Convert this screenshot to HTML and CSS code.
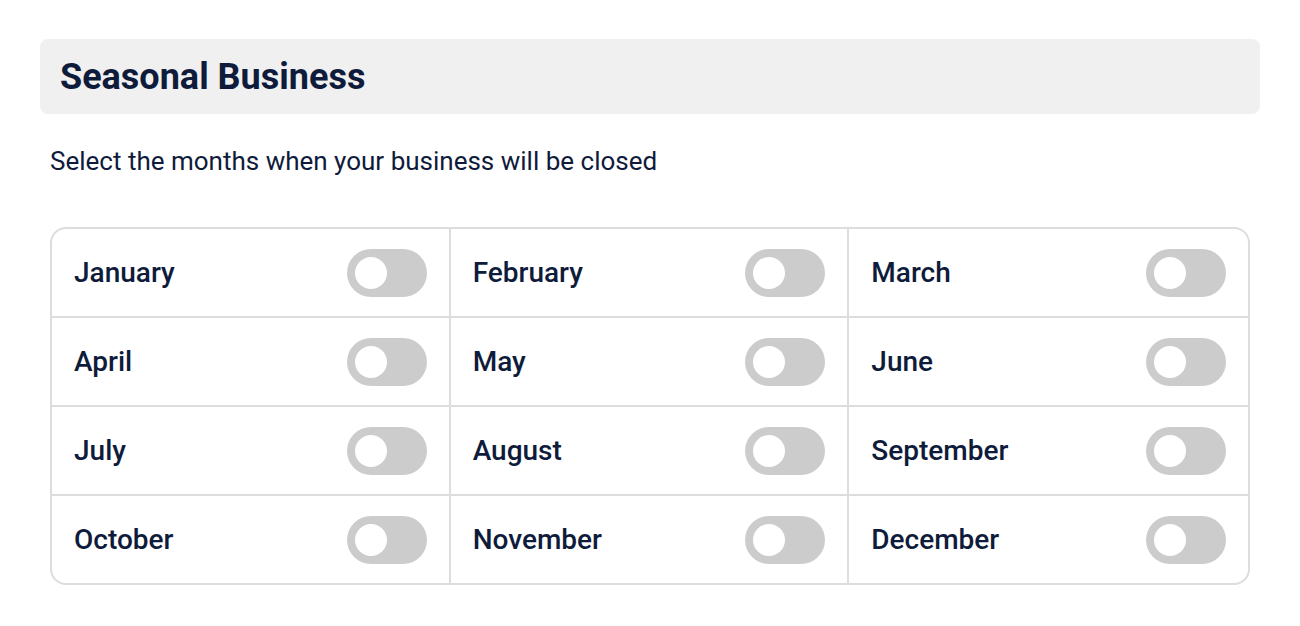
FILE: index.html
```html
<!DOCTYPE html>
<html lang="en">
<head>
    <meta charset="UTF-8">
    <meta name="viewport" content="width=device-width, initial-scale=1.0">
    <title>Seasonal Business</title>
    <link rel="stylesheet" href="styles.css">
</head>
<body>
    <div class="page">
        <header class="section-header">Seasonal Business</header>
        <p class="hint">Select the months when your business will be closed</p>
        <div class="months">
            <label class="month">January <span class="toggle"><span class="knob"></span></span></label>
            <label class="month">February <span class="toggle"><span class="knob"></span></span></label>
            <label class="month">March <span class="toggle"><span class="knob"></span></span></label>
            <label class="month">April <span class="toggle"><span class="knob"></span></span></label>
            <label class="month">May <span class="toggle"><span class="knob"></span></span></label>
            <label class="month">June <span class="toggle"><span class="knob"></span></span></label>
            <label class="month">July <span class="toggle"><span class="knob"></span></span></label>
            <label class="month">August <span class="toggle"><span class="knob"></span></span></label>
            <label class="month">September <span class="toggle"><span class="knob"></span></span></label>
            <label class="month">October <span class="toggle"><span class="knob"></span></span></label>
            <label class="month">November <span class="toggle"><span class="knob"></span></span></label>
            <label class="month">December <span class="toggle"><span class="knob"></span></span></label>
        </div>
    </div>
</body>
</html>
```

FILE: styles.css
```css
body {
    margin: 0;
    padding: 0;
    background: #fff;
    font-family: Roboto, Arial, sans-serif;
    color: #0f1b3b;
}
.page {
    padding: 39px 40px;
}
.section-header {
    display: flex;
    align-items: center;
    height: 75px;
    padding: 0 20px;
    background-color: #f0f0f0;
    border-radius: 8px;
    font-size: 36px;
    font-weight: 700;
}
.hint {
    margin: 32px 10px 0;
    font-size: 26px;
    line-height: 30px;
}
.months {
    display: grid;
    grid-template-columns: repeat(3, 1fr);
    margin: 51px 10px 0;
    border: 2px solid #dddddd;
    border-radius: 16px;
    overflow: hidden;
}
.month {
    display: flex;
    align-items: center;
    justify-content: space-between;
    height: 87px;
    padding: 0 22px;
    border-right: 2px solid #dddddd;
    border-bottom: 2px solid #dddddd;
    font-size: 28px;
    font-weight: 500;
    cursor: pointer;
}
.month:nth-child(3n) {
    border-right: none;
}
.month:nth-child(n+10) {
    border-bottom: none;
}
.toggle {
    display: flex;
    align-items: center;
    width: 80px;
    height: 48px;
    padding: 0 8px;
    box-sizing: border-box;
    background-color: #cccccc;
    border-radius: 24px;
}
.knob {
    width: 32px;
    height: 32px;
    border-radius: 50%;
    background: #fff;
}
```
